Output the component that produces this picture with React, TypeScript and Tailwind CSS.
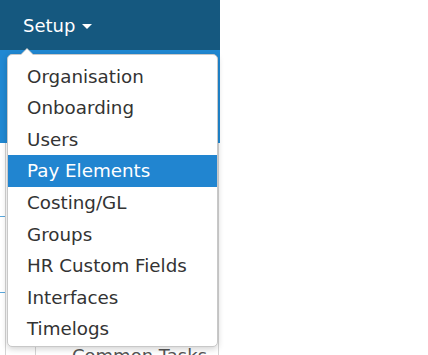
import React from "react";

const items = [
  "Organisation",
  "Onboarding",
  "Users",
  "Pay Elements",
  "Costing/GL",
  "Groups",
  "HR Custom Fields",
  "Interfaces",
  "Timelogs",
];

export default function App() {
  return (
    <div
      className="relative w-[428px] h-[355px] overflow-hidden bg-white"
      style={{ fontFamily: '"DejaVu Sans", Verdana, sans-serif' }}
    >
      {/* background page */}
      <div className="w-[220px] flex flex-col">
        <div className="h-[50px] bg-[#15587f] flex items-center pl-[23px] text-white text-[18px]">
          <span>Setup</span>
          <span className="ml-[7px] mt-[2px] w-0 h-0 border-l-[5px] border-r-[5px] border-t-[5px] border-l-transparent border-r-transparent border-t-white" />
        </div>
        <div className="h-[93px] bg-[#2088d2]" />
        <div className="h-[212px] flex">
          <div className="w-[5px] flex flex-col pt-[73px] gap-[75px]">
            <div className="h-[1px] bg-[#5aa7dc]" />
            <div className="h-[1px] bg-[#5aa7dc]" />
          </div>
          <div className="flex-1 mr-[1px] border-l border-r border-[#d4d4d4] flex flex-col justify-end pl-[29px]">
            <div className="flex items-start h-[8px] overflow-visible">
              <div className="h-[10px] border-l border-[#d4d4d4]" />
              <div className="ml-[36px] text-[18px] text-[#555] leading-none">Common Tasks</div>
            </div>
          </div>
        </div>
      </div>

      {/* dropdown menu */}
      <div className="absolute left-[7px] top-[54px] w-[211px] h-[293px] bg-white border border-[#c8c8c8] rounded-[5px] shadow-[0_2px_6px_rgba(0,0,0,0.18)] pt-[5.5px]">
        <div className="absolute left-[12px] top-[-7px] w-0 h-0 border-l-[7px] border-r-[7px] border-b-[7px] border-l-transparent border-r-transparent border-b-[#c8c8c8]" />
        <div className="absolute left-[13px] top-[-6px] w-0 h-0 border-l-[6px] border-r-[6px] border-b-[6px] border-l-transparent border-r-transparent border-b-white" />
        {items.map((it) => (
          <div
            key={it}
            className={
              it === "Pay Elements"
                ? "h-[31.6px] flex items-center pl-[19px] text-[18.3px] text-white bg-[#2185d0]"
                : "h-[31.6px] flex items-center pl-[19px] text-[18.3px] text-[#333333]"
            }
          >
            {it}
          </div>
        ))}
      </div>
    </div>
  );
}
